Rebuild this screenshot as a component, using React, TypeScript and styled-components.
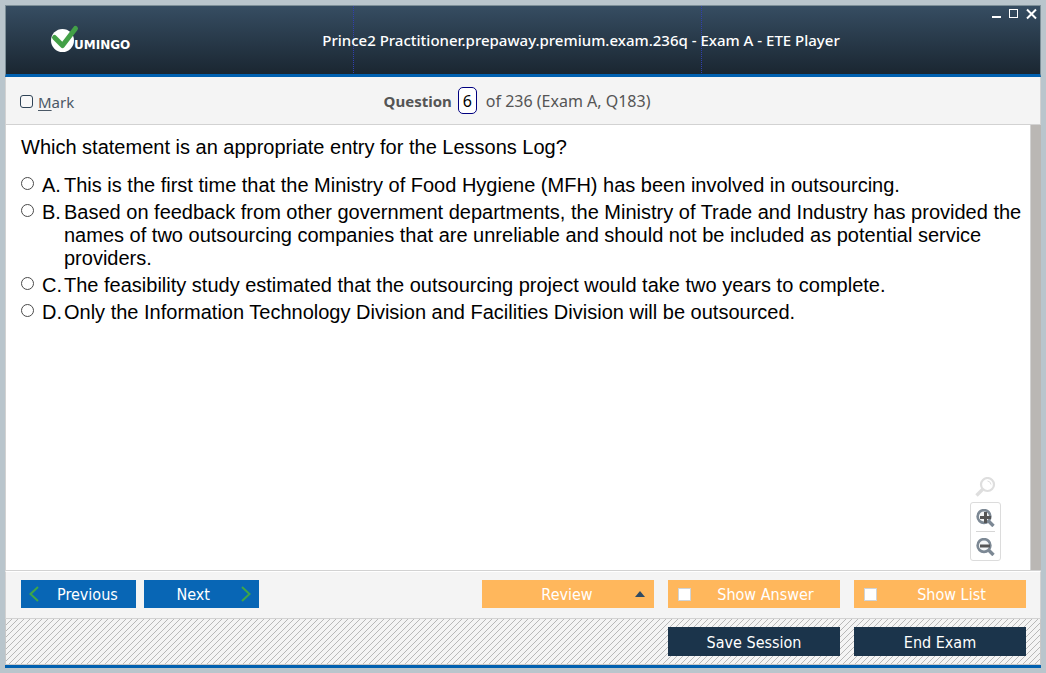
import React, { useState } from "react";
import styled, { createGlobalStyle } from "styled-components";

const uiFont = `"Noto Sans", "Open Sans", sans-serif`;
const buttonFont = `"DejaVu Sans Condensed", "DejaVu Sans", "Noto Sans", sans-serif`;
const bodyFont = `"Liberation Sans", Arial, sans-serif`;

const GlobalStyle = createGlobalStyle`
  *, *::before, *::after { box-sizing: border-box; }
  body { margin: 0; background: #b9c5cc; }
  button, input { font: inherit; margin: 0; }
`;

const Frame = styled.div`
  min-height: 100vh;
  padding: 5px;
  display: flex;
  background: #b9c5cc;
  font-family: ${uiFont};
`;

const Window = styled.div`
  flex: 1;
  min-width: 0;
  display: flex;
  flex-direction: column;
  background: #ffffff;
  border-bottom: 3px solid #0060b0;
`;

const Header = styled.header`
  height: 72px;
  flex: none;
  display: grid;
  grid-template-columns: 116px 1fr;
  align-items: center;
  border: 1px solid #7d8f98;
  border-bottom: 3px solid #0060b0;
  background:
    repeating-linear-gradient(#3040b0 0 1px, transparent 1px 2px) 347px 0 / 1px 100% no-repeat,
    repeating-linear-gradient(#3040b0 0 1px, transparent 1px 2px) 695px 0 / 1px 100% no-repeat,
    linear-gradient(#364d62, #1a2631);
`;

const Logo = styled.div`
  grid-area: 1 / 1;
  padding-left: 44px;
  svg { display: block; overflow: visible; }
`;

const Title = styled.h1`
  grid-area: 1 / 2;
  margin: 0;
  text-align: center;
  font-size: 15px;
  line-height: 20px;
  font-weight: 500;
  color: #ffffff;
`;

const WindowControls = styled.div`
  grid-area: 1 / 2;
  justify-self: end;
  align-self: start;
  display: flex;
  gap: 5px;
  padding: 2px 2px 0 0;
`;

const WindowButton = styled.button`
  width: 13px;
  height: 13px;
  padding: 0;
  border: 0;
  background: none;
  svg { display: block; }
`;

const QuestionBar = styled.div`
  height: 48px;
  flex: none;
  display: grid;
  grid-template-columns: 1fr auto 1fr;
  align-items: center;
  padding: 0 26px 0 14px;
  background: #f4f4f4;
  border: 1px solid #d2d2d2;
  border-top: 0;
  font-size: 16px;
  line-height: 24px;
  color: #555555;
`;

const MarkLabel = styled.label`
  display: flex;
  align-items: center;
  gap: 5px;
  padding-top: 2px;
  font-size: 15px;
  color: #4a5866;
  u { text-underline-offset: 2px; }
`;

const MarkBox = styled.input`
  appearance: none;
  width: 13px;
  height: 13px;
  border: 1px solid #2f4356;
  border-radius: 3px;
  background: #f8f8f8;
`;

const Counter = styled.div`
  display: flex;
  align-items: center;
  label { font-size: 15px; font-weight: 700; }
`;

const CounterInput = styled.input`
  width: 19px;
  height: 27px;
  margin: 0 9px 0 6px;
  padding: 0;
  text-align: center;
  color: #000000;
  background: #ffffff;
  border: 1px solid #000080;
  border-radius: 5px;
`;

const Content = styled.main`
  position: relative;
  flex: 1;
  display: flex;
  border-left: 1px solid #d2d2d2;
  border-bottom: 1px solid #d2d2d2;
`;

const Question = styled.form`
  flex: 1;
  min-width: 0;
  padding: 11px 6px 60px 15px;
  border-right: 1px solid #d2d2d2;
  font-family: ${bodyFont};
  font-size: 20px;
  line-height: 23px;
  color: #000000;
`;

const Prompt = styled.p`
  margin: 0 0 15px;
`;

const Option = styled.label`
  display: grid;
  grid-template-columns: 21px 22px 1fr;
  align-items: start;
  margin-bottom: 4px;
`;

const OptionRadio = styled.input`
  appearance: none;
  width: 13px;
  height: 13px;
  margin-top: 3px;
  border: 1px solid #4a4a4a;
  border-radius: 50%;
  background: #ffffff;
`;

const ScrollTrack = styled.div`
  width: 10px;
  background: #bab7b4;
`;

const ZoomTools = styled.div`
  position: absolute;
  right: 40px;
  bottom: 9px;
  display: flex;
  flex-direction: column;
  align-items: center;
  gap: 4px;
`;

const ZoomPanel = styled.div`
  width: 31px;
  padding: 0 5px;
  border: 1px solid #dcdcdc;
  border-radius: 3px;
  background: #ffffff;
`;

const ZoomButton = styled.button`
  box-sizing: content-box;
  display: flex;
  align-items: center;
  justify-content: center;
  width: 100%;
  height: 26px;
  padding: 2px 0 0;
  border: 0;
  background: none;
  & + & { border-top: 1px solid #d6d6d6; }
`;

const Toolbar = styled.div`
  flex: none;
  height: 48px;
  display: flex;
  align-items: center;
  gap: 14px;
  padding: 0 14px 2px 15px;
  background: #f4f4f4;
  border: 1px solid #d2d2d2;
  border-top-color: #ffffff;
`;

const NavGroup = styled.div`
  display: flex;
  gap: 8px;
  margin-right: auto;
`;

const BaseButton = styled.button`
  display: flex;
  align-items: center;
  justify-content: center;
  height: 28px;
  padding: 0;
  border: 0;
  font-family: ${buttonFont};
  font-size: 16px;
  line-height: 20px;
  color: #ffffff;
  span { padding-top: 2px; }
`;

const NavButton = styled(BaseButton)<{ $back?: boolean }>`
  width: 115px;
  gap: ${(p) => (p.$back ? 18 : 31)}px;
  justify-content: ${(p) => (p.$back ? "flex-start" : "flex-end")};
  padding: 0 8px;
  background: #0866b5;
`;

const ReviewButton = styled(BaseButton)`
  width: 172px;
  padding: 0 8px;
  background: #ffb75c;
  span { flex: 1; padding-left: 10px; text-align: center; }
`;

const ToggleLabel = styled.label`
  display: flex;
  align-items: center;
  width: 172px;
  height: 28px;
  padding: 0 0 0 10px;
  background: #ffb75c;
  font-family: ${buttonFont};
  font-size: 16px;
  line-height: 20px;
  color: #ffffff;
  span { flex: 1; padding-top: 2px; text-align: center; }
`;

const ToggleBox = styled.input`
  appearance: none;
  width: 13px;
  height: 13px;
  border: 1px solid #d0d3d6;
  background: #ffffff;
`;

const SessionBar = styled.footer`
  position: relative;
  flex: none;
  height: 46px;
  display: flex;
  align-items: center;
  justify-content: flex-end;
  gap: 14px;
  padding: 0 14px;
  border: 1px solid #c8c8c8;
  border-top: 0;
  background: #f4f4f4;
`;

const Hatch = styled.svg`
  position: absolute;
  inset: 0;
  width: 100%;
  height: 100%;
`;

const SessionButton = styled(BaseButton)`
  position: relative;
  width: 172px;
  height: 29px;
  background: #1b344b;
`;

const Chevron = ({ back }: { back?: boolean }) => (
  <svg width="10" height="16" viewBox="0 0 10 16" fill="none" stroke="#3fa648" strokeWidth="2">
    <path d={back ? "M9 1 L1.500 8 L9 15" : "M1 1 L8.500 8 L1 15"} />
  </svg>
);

const Magnifier = ({ sign }: { sign: "plus" | "minus" }) => (
  <svg width="19" height="18" viewBox="0 0 19 18" fill="none">
    <path d="M12.500 12 L17.500 17" stroke="#7c8894" strokeWidth="3.400" />
    <circle cx="8" cy="7.500" r="6.400" fill="#f4f6f7" stroke="#7c8894" strokeWidth="2.600" />
    <path d={sign === "plus" ? "M4 8.500 H15 M9.500 3 V14" : "M4 8 H14"} stroke="#555555" strokeWidth="3" />
  </svg>
);

const options = [
  { key: "A", text: "This is the first time that the Ministry of Food Hygiene (MFH) has been involved in outsourcing." },
  {
    key: "B",
    text: "Based on feedback from other government departments, the Ministry of Trade and Industry has provided the names of two outsourcing companies that are unreliable and should not be included as potential service providers.",
  },
  { key: "C", text: "The feasibility study estimated that the outsourcing project would take two years to complete." },
  { key: "D", text: "Only the Information Technology Division and Facilities Division will be outsourced." },
];

export default function App() {
  const [page, setPage] = useState("6");
  return (
    <Frame>
      <GlobalStyle />
      <Window>
        <Header>
          <Logo>
            <svg width="80" height="28" viewBox="0 0 80 28" role="img" aria-label="Vumingo">
              <circle cx="12.500" cy="14.500" r="11.500" fill="#ffffff" />
              <path d="M4.500 11.500 L12.500 19.500 L25.500 2.500" fill="none" stroke="#43a047" strokeWidth="5" strokeLinecap="round" strokeLinejoin="round" />
              <text x="24" y="23" fill="#ffffff" fontFamily="DejaVu Sans, sans-serif" fontWeight="700" fontSize="12">UMINGO</text>
            </svg>
          </Logo>
          <Title>Prince2 Practitioner.prepaway.premium.exam.236q - Exam A - ETE Player</Title>
          <WindowControls>
            <WindowButton aria-label="Minimize">
              <svg width="13" height="13"><path d="M3 9 H12" stroke="#fff" strokeWidth="2" /></svg>
            </WindowButton>
            <WindowButton aria-label="Maximize">
              <svg width="13" height="13"><rect x="2.500" y="1.500" width="8" height="8" fill="none" stroke="#fff" /></svg>
            </WindowButton>
            <WindowButton aria-label="Close">
              <svg width="13" height="13"><path d="M2 1.500 L11 10.500 M11 1.500 L2 10.500" stroke="#fff" strokeWidth="2" /></svg>
            </WindowButton>
          </WindowControls>
        </Header>

        <QuestionBar>
          <MarkLabel>
            <MarkBox type="checkbox" />
            <span><u>M</u>ark</span>
          </MarkLabel>
          <Counter>
            <label htmlFor="question-number">Question</label>
            <CounterInput id="question-number" type="text" value={page} onChange={(e) => setPage(e.target.value)} />
            <span>of 236 (Exam A, Q183)</span>
          </Counter>
        </QuestionBar>

        <Content>
          <Question>
            <Prompt>Which statement is an appropriate entry for the Lessons Log?</Prompt>
            {options.map((o) => (
              <Option key={o.key}>
                <OptionRadio type="radio" name="answer" value={o.key} />
                <span>{o.key}.</span>
                <span>{o.text}</span>
              </Option>
            ))}
          </Question>
          <ScrollTrack />
          <ZoomTools>
            <svg width="21" height="21" viewBox="0 0 21 21" fill="none" stroke="#dedede">
              <circle cx="12.500" cy="7.500" r="6.500" strokeWidth="2.200" />
              <path d="M8 12 L1.500 18.500" strokeWidth="3.400" />
              <path d="M12.500 4 A4 4 0 0 1 16 7.500" strokeWidth="1" />
            </svg>
            <ZoomPanel>
              <ZoomButton aria-label="Zoom in"><Magnifier sign="plus" /></ZoomButton>
              <ZoomButton aria-label="Zoom out"><Magnifier sign="minus" /></ZoomButton>
            </ZoomPanel>
          </ZoomTools>
        </Content>

        <Toolbar>
          <NavGroup>
            <NavButton $back><Chevron back /><span>Previous</span></NavButton>
            <NavButton><span>Next</span><Chevron /></NavButton>
          </NavGroup>
          <ReviewButton>
            <span>Review</span>
            <svg width="12" height="6" viewBox="0 0 12 6"><path d="M1 6 L6 0 L11 6 Z" fill="#2f4a63" /></svg>
          </ReviewButton>
          <ToggleLabel><ToggleBox type="checkbox" /><span>Show Answer</span></ToggleLabel>
          <ToggleLabel><ToggleBox type="checkbox" /><span>Show List</span></ToggleLabel>
        </Toolbar>

        <SessionBar>
          <Hatch aria-hidden="true">
            <defs>
              <pattern id="hatch" width="6" height="6" patternUnits="userSpaceOnUse">
                <path d="M5 0h1v1h-1z M4 1h1v1h-1z M3 2h1v1h-1z M2 3h1v1h-1z M1 4h1v1h-1z M0 5h1v1h-1z" fill="#b8b8b8" shapeRendering="crispEdges" />
              </pattern>
            </defs>
            <rect width="100%" height="100%" fill="url(#hatch)" />
          </Hatch>
          <SessionButton><span>Save Session</span></SessionButton>
          <SessionButton><span>End Exam</span></SessionButton>
        </SessionBar>
      </Window>
    </Frame>
  );
}
